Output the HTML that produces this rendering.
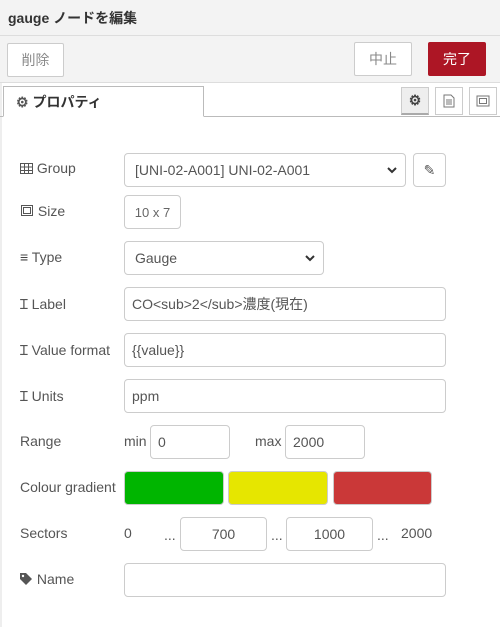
<!DOCTYPE html>
<html><head><meta charset="utf-8"><style>
*{box-sizing:border-box;margin:0;padding:0}
body{width:500px;height:627px;overflow:hidden;background:#fff;font-family:"Liberation Sans","Noto Sans CJK JP",sans-serif;font-size:14px;color:#555;position:relative}
.a{position:absolute}
.hdr{left:0;top:0;width:500px;height:36px;background:#f3f3f3;border-bottom:1px solid #ddd}
.hdr span{position:absolute;left:8px;top:8px;font-weight:bold;color:#333;font-size:14px}
.bar{left:0;top:36px;width:500px;height:47px;background:#f3f3f3;border-bottom:1px solid #ddd}
.btn{position:absolute;border:1px solid #ccc;background:#fff;color:#888;font-size:14px;display:flex;align-items:center;justify-content:center;border-radius:2px}
.inp{position:absolute;border:1px solid #ccc;border-radius:4px;background:#fff;height:34px;display:flex;align-items:center;padding-left:7px;color:#555}
.lbl{position:absolute;left:20px;color:#555}
.ib{position:absolute;border:1px solid #ccc;background:#fff;width:28px;height:28px;top:87px;display:flex;align-items:center;justify-content:center}
.chev{position:absolute;right:8px;top:13px}
</style></head><body>
<div class="a" style="left:0;top:83px;width:2px;height:544px;background:#eee"></div>
<div class="a hdr"><span>gauge ノードを編集</span></div>
<div class="a bar">
<div class="btn" style="left:7px;top:7px;width:57px;height:34px">削除</div>
<div class="btn" style="left:354px;top:6px;width:58px;height:34px">中止</div>
<div class="btn" style="left:428px;top:6px;width:58px;height:34px;background:#ad1625;border-color:#ad1625;color:#fff">完了</div>
</div>
<div class="a" style="left:0;top:116px;width:500px;height:1px;background:#bbb"></div>
<div class="a" style="left:3px;top:86px;width:201px;height:31px;border:1px solid #bbb;border-bottom:1px solid #fff;background:#fff;padding:5px 12px;color:#333;font-weight:bold;font-size:14px"><span style="color:#555">⚙</span> プロパティ</div>
<div class="ib" style="left:401px;background:#eee;border-bottom:2px solid #aaa;color:#444;font-weight:bold">⚙</div>
<div class="ib" style="left:435px"><svg width="12" height="14"><path d="M1 1h7l3 3v9H1z M3 6h6M3 8h6M3 10h6" fill="none" stroke="#777"/></svg></div>
<div class="ib" style="left:469px"><svg width="16" height="14"><rect x="2" y="2" width="12" height="10" fill="none" stroke="#777"/><rect x="4.5" y="4.5" width="7" height="5" fill="none" stroke="#777"/></svg></div>

<div class="lbl" style="top:160px"><svg width="13" height="11" style="vertical-align:-1px"><rect x=".5" y=".5" width="12" height="10" fill="none" stroke="#555"/><path d="M.5 4h12M.5 7.5h12M4.5 .5v10M8.5 .5v10" stroke="#555"/></svg> Group</div>
<div class="inp" style="left:124px;top:153px;width:282px;padding-left:10px">[UNI-02-A001] UNI-02-A001<svg class="chev" width="10" height="7"><path d="M1 1l4 4 4-4" fill="none" stroke="#333" stroke-width="2"/></svg></div>
<div class="btn" style="left:413px;top:153px;width:33px;height:34px;border-radius:4px;color:#555">✎</div>

<div class="lbl" style="top:203px"><svg width="14" height="13" style="vertical-align:-1px"><rect x="1.5" y="1.5" width="11" height="10" fill="none" stroke="#555"/><rect x="3.5" y="3.5" width="7" height="6" fill="none" stroke="#555"/></svg> Size</div>
<div class="inp" style="left:124px;top:195px;width:57px;justify-content:center;padding:0;color:#666;font-size:13px">10 x 7</div>

<div class="lbl" style="top:249px"><b style="color:#444">≡</b> Type</div>
<div class="inp" style="left:124px;top:241px;width:200px;padding-left:10px">Gauge<svg class="chev" width="10" height="7"><path d="M1 1l4 4 4-4" fill="none" stroke="#333" stroke-width="2"/></svg></div>

<div class="lbl" style="top:295px">Ɪ Label</div>
<div class="inp" style="left:124px;top:287px;width:322px">CO&lt;sub&gt;2&lt;/sub&gt;濃度(現在)</div>
<div class="lbl" style="top:341px">Ɪ Value format</div>
<div class="inp" style="left:124px;top:333px;width:322px">{{value}}</div>
<div class="lbl" style="top:387px">Ɪ Units</div>
<div class="inp" style="left:124px;top:379px;width:322px">ppm</div>

<div class="lbl" style="top:433px">Range</div>
<div class="a" style="left:124px;top:433px">min</div>
<div class="inp" style="left:150px;top:425px;width:80px">0</div>
<div class="a" style="left:255px;top:433px">max</div>
<div class="inp" style="left:285px;top:425px;width:80px">2000</div>

<div class="lbl" style="top:479px">Colour gradient</div>
<div class="a" style="left:124px;top:471px;width:100px;height:34px;background:#00b500;border:1px solid #ccc;border-radius:4px"></div>
<div class="a" style="left:228px;top:471px;width:100px;height:34px;background:#e6e600;border:1px solid #ccc;border-radius:4px"></div>
<div class="a" style="left:333px;top:471px;width:99px;height:34px;background:#ca3838;border:1px solid #ccc;border-radius:4px"></div>

<div class="lbl" style="top:525px">Sectors</div>
<div class="a" style="left:124px;top:525px">0</div>
<div class="a" style="left:164px;top:527px">...</div>
<div class="inp" style="left:180px;top:517px;width:87px;justify-content:center;padding:0">700</div>
<div class="a" style="left:271px;top:527px">...</div>
<div class="inp" style="left:286px;top:517px;width:87px;justify-content:center;padding:0">1000</div>
<div class="a" style="left:377px;top:527px">...</div>
<div class="a" style="left:401px;top:525px">2000</div>

<div class="lbl" style="top:571px"><svg width="13" height="12" style="vertical-align:-1px"><path d="M0 0h6l6 6-6 6-6-6z" fill="#555"/><circle cx="3" cy="3" r="1.2" fill="#fff"/></svg> Name</div>
<div class="inp" style="left:124px;top:563px;width:322px"></div>
</body></html>
